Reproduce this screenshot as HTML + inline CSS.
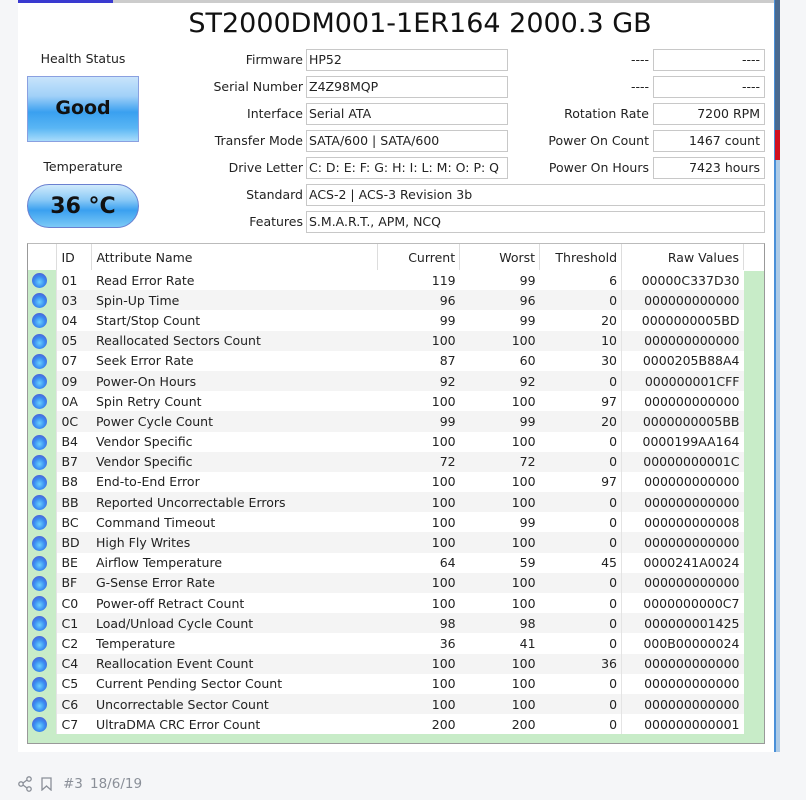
<!DOCTYPE html>
<html><head><meta charset="utf-8"><style>
*{margin:0;padding:0;box-sizing:border-box}
body{width:806px;height:800px;background:#f5f6f8;position:relative;overflow:hidden;font-family:"DejaVu Sans","Liberation Sans",sans-serif;color:#222}
.a{position:absolute}
#shot{left:18px;top:0;width:757px;height:752px;background:#fff;border-top:3px solid #ccc}
.lbl{position:absolute;font-size:12.5px;text-align:right;white-space:nowrap}
.fld{position:absolute;height:22px;border:1px solid #c8c8c8;background:#fff;font-size:12.5px;line-height:20px;padding:0 2px;white-space:nowrap;overflow:hidden}
.r{text-align:right;padding-right:4px}
table{border-collapse:collapse;font-size:12.5px}
td,th{height:20.2px;padding:0 4px;white-space:nowrap;font-weight:normal;background:#fff}
td:nth-child(2){border-left:1px solid #e4e4e4}
td:nth-child(7){border-left:1px solid #e4e4e4}
th{height:26px;border-right:1px solid #ddd}
tbody tr:nth-child(even) td{background:#f4f4f4}
tbody tr td:first-child{background:#c8ecc8 !important}
td.n{text-align:right}
.dot{display:inline-block;width:15px;height:15px;border-radius:50%;background:radial-gradient(circle at 50% 60%,#6ad0ff 0,#3a8cf0 45%,#5848c8 100%);vertical-align:middle}
</style></head><body>
<div class="a" id="shot"></div>
<div class="a" style="left:18px;top:0;width:95px;height:3px;background:#3a3ad0"></div>
<div class="a" style="left:774px;top:0;width:6px;height:752px;background:#aecbe6;border-left:2px solid #4a90d8"></div>
<div class="a" style="left:775px;top:0;width:5px;height:130px;background:#4a6a90"></div>
<div class="a" style="left:775px;top:130px;width:5px;height:30px;background:#d01020"></div>
<div class="a" style="left:100px;top:8px;width:640px;text-align:center;font-size:27px;color:#111">ST2000DM001-1ER164 2000.3 GB</div>

<div class="a" style="left:27px;top:51px;width:112px;text-align:center;font-size:12.5px">Health Status</div>
<div class="a" style="left:27px;top:76px;width:112px;height:66px;border:1px solid #8aa0e0;background:linear-gradient(#c8e4fb 0,#a0d0f8 30%,#3aa0f0 55%,#5ab6f4 80%,#a8dcfb 100%);text-align:center;line-height:62px;font-weight:bold;font-size:19px;color:#111">Good</div>
<div class="a" style="left:27px;top:159px;width:112px;text-align:center;font-size:12.5px">Temperature</div>
<div class="a" style="left:27px;top:184px;width:112px;height:44px;border:1px solid #6a80d0;border-radius:22px;background:linear-gradient(#d0eafc 0,#8ccaf6 35%,#3aa0f0 60%,#7ccaf6 100%);text-align:center;line-height:44px;font-weight:bold;font-size:22px;color:#111">36 °C</div>

<div class="lbl" style="right:503px;top:52px">Firmware</div>
<div class="lbl" style="right:503px;top:79px">Serial Number</div>
<div class="lbl" style="right:503px;top:106px">Interface</div>
<div class="lbl" style="right:503px;top:133px">Transfer Mode</div>
<div class="lbl" style="right:503px;top:160px">Drive Letter</div>
<div class="lbl" style="right:503px;top:187px">Standard</div>
<div class="lbl" style="right:503px;top:214px">Features</div>
<div class="fld" style="left:306px;top:49px;width:202px">HP52</div>
<div class="fld" style="left:306px;top:76px;width:202px">Z4Z98MQP</div>
<div class="fld" style="left:306px;top:103px;width:202px">Serial ATA</div>
<div class="fld" style="left:306px;top:130px;width:202px">SATA/600 | SATA/600</div>
<div class="fld" style="left:306px;top:157px;width:202px">C: D: E: F: G: H: I: L: M: O: P: Q</div>
<div class="fld" style="left:306px;top:184px;width:459px">ACS-2 | ACS-3 Revision 3b</div>
<div class="fld" style="left:306px;top:211px;width:459px">S.M.A.R.T., APM, NCQ</div>

<div class="lbl" style="right:157px;top:52px">----</div>
<div class="lbl" style="right:157px;top:79px">----</div>
<div class="lbl" style="right:157px;top:106px">Rotation Rate</div>
<div class="lbl" style="right:157px;top:133px">Power On Count</div>
<div class="lbl" style="right:157px;top:160px">Power On Hours</div>
<div class="fld r" style="left:653px;top:49px;width:112px">----</div>
<div class="fld r" style="left:653px;top:76px;width:112px">----</div>
<div class="fld r" style="left:653px;top:103px;width:112px">7200 RPM</div>
<div class="fld r" style="left:653px;top:130px;width:112px">1467 count</div>
<div class="fld r" style="left:653px;top:157px;width:112px">7423 hours</div>

<div class="a" style="left:27px;top:243px;width:738px;height:501px;border:1px solid #999;border-top-color:#bbb;background:#c8ecc8;overflow:hidden">
<div class="a" style="left:0;top:0;width:736px;height:27px;background:#fff"></div>
<table class="a" style="left:0;top:0;width:716px">
<colgroup><col style="width:29px"><col style="width:35px"><col style="width:286px"><col style="width:82px"><col style="width:80px"><col style="width:82px"><col style="width:122px"></colgroup>
<thead><tr><th></th><th style="text-align:left">ID</th><th style="text-align:left">Attribute Name</th><th style="text-align:right">Current</th><th style="text-align:right">Worst</th><th style="text-align:right">Threshold</th><th style="text-align:right">Raw Values</th></tr></thead>
<tbody>
<tr><td><span class="dot"></span></td><td>01</td><td>Read Error Rate</td><td class="n">119</td><td class="n">99</td><td class="n">6</td><td class="n">00000C337D30</td></tr>
<tr><td><span class="dot"></span></td><td>03</td><td>Spin-Up Time</td><td class="n">96</td><td class="n">96</td><td class="n">0</td><td class="n">000000000000</td></tr>
<tr><td><span class="dot"></span></td><td>04</td><td>Start/Stop Count</td><td class="n">99</td><td class="n">99</td><td class="n">20</td><td class="n">0000000005BD</td></tr>
<tr><td><span class="dot"></span></td><td>05</td><td>Reallocated Sectors Count</td><td class="n">100</td><td class="n">100</td><td class="n">10</td><td class="n">000000000000</td></tr>
<tr><td><span class="dot"></span></td><td>07</td><td>Seek Error Rate</td><td class="n">87</td><td class="n">60</td><td class="n">30</td><td class="n">0000205B88A4</td></tr>
<tr><td><span class="dot"></span></td><td>09</td><td>Power-On Hours</td><td class="n">92</td><td class="n">92</td><td class="n">0</td><td class="n">000000001CFF</td></tr>
<tr><td><span class="dot"></span></td><td>0A</td><td>Spin Retry Count</td><td class="n">100</td><td class="n">100</td><td class="n">97</td><td class="n">000000000000</td></tr>
<tr><td><span class="dot"></span></td><td>0C</td><td>Power Cycle Count</td><td class="n">99</td><td class="n">99</td><td class="n">20</td><td class="n">0000000005BB</td></tr>
<tr><td><span class="dot"></span></td><td>B4</td><td>Vendor Specific</td><td class="n">100</td><td class="n">100</td><td class="n">0</td><td class="n">0000199AA164</td></tr>
<tr><td><span class="dot"></span></td><td>B7</td><td>Vendor Specific</td><td class="n">72</td><td class="n">72</td><td class="n">0</td><td class="n">00000000001C</td></tr>
<tr><td><span class="dot"></span></td><td>B8</td><td>End-to-End Error</td><td class="n">100</td><td class="n">100</td><td class="n">97</td><td class="n">000000000000</td></tr>
<tr><td><span class="dot"></span></td><td>BB</td><td>Reported Uncorrectable Errors</td><td class="n">100</td><td class="n">100</td><td class="n">0</td><td class="n">000000000000</td></tr>
<tr><td><span class="dot"></span></td><td>BC</td><td>Command Timeout</td><td class="n">100</td><td class="n">99</td><td class="n">0</td><td class="n">000000000008</td></tr>
<tr><td><span class="dot"></span></td><td>BD</td><td>High Fly Writes</td><td class="n">100</td><td class="n">100</td><td class="n">0</td><td class="n">000000000000</td></tr>
<tr><td><span class="dot"></span></td><td>BE</td><td>Airflow Temperature</td><td class="n">64</td><td class="n">59</td><td class="n">45</td><td class="n">0000241A0024</td></tr>
<tr><td><span class="dot"></span></td><td>BF</td><td>G-Sense Error Rate</td><td class="n">100</td><td class="n">100</td><td class="n">0</td><td class="n">000000000000</td></tr>
<tr><td><span class="dot"></span></td><td>C0</td><td>Power-off Retract Count</td><td class="n">100</td><td class="n">100</td><td class="n">0</td><td class="n">0000000000C7</td></tr>
<tr><td><span class="dot"></span></td><td>C1</td><td>Load/Unload Cycle Count</td><td class="n">98</td><td class="n">98</td><td class="n">0</td><td class="n">000000001425</td></tr>
<tr><td><span class="dot"></span></td><td>C2</td><td>Temperature</td><td class="n">36</td><td class="n">41</td><td class="n">0</td><td class="n">000B00000024</td></tr>
<tr><td><span class="dot"></span></td><td>C4</td><td>Reallocation Event Count</td><td class="n">100</td><td class="n">100</td><td class="n">36</td><td class="n">000000000000</td></tr>
<tr><td><span class="dot"></span></td><td>C5</td><td>Current Pending Sector Count</td><td class="n">100</td><td class="n">100</td><td class="n">0</td><td class="n">000000000000</td></tr>
<tr><td><span class="dot"></span></td><td>C6</td><td>Uncorrectable Sector Count</td><td class="n">100</td><td class="n">100</td><td class="n">0</td><td class="n">000000000000</td></tr>
<tr><td><span class="dot"></span></td><td>C7</td><td>UltraDMA CRC Error Count</td><td class="n">200</td><td class="n">200</td><td class="n">0</td><td class="n">000000000001</td></tr>
</tbody></table>
</div>

<svg class="a" style="left:18px;top:776px" width="14" height="16" viewBox="0 0 14 16" fill="none" stroke="#8a8f98" stroke-width="1.3"><circle cx="3" cy="8" r="2.2"/><circle cx="11" cy="3" r="2.2"/><circle cx="11" cy="13" r="2.2"/><path d="M5 7 9 4M5 9 9 12"/></svg>
<svg class="a" style="left:41px;top:777px" width="11" height="14" viewBox="0 0 11 14" fill="none" stroke="#8a8f98" stroke-width="1.3"><path d="M1 1h9v12L5.5 9 1 13z"/></svg>
<div class="a" style="left:63px;top:776px;font-size:13.5px;color:#8a8f98">#3</div>
<div class="a" style="left:90px;top:776px;font-size:13.5px;color:#8a8f98">18/6/19</div>
</body></html>
